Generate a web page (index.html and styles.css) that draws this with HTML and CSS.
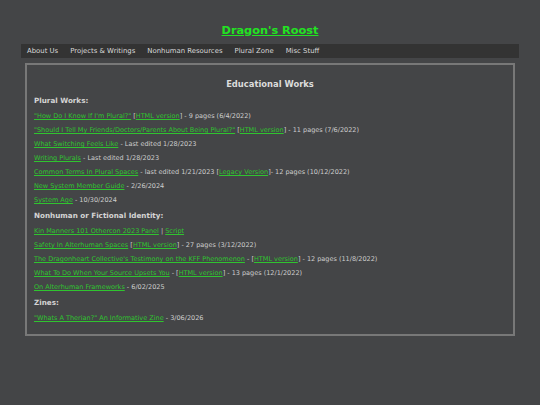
FILE: index.html
```html
<!DOCTYPE html>
<html>
<head>
<meta charset="utf-8">
<link rel="stylesheet" href="styles.css">
</head>
<body>
<div class="page">
  <header class="site-header">
    <a class="site-title" href="#">Dragon's Roost</a>
  </header>
  <nav class="nav">
    <a href="#">About Us</a>
    <a href="#">Projects &amp; Writings</a>
    <a href="#">Nonhuman Resources</a>
    <a href="#">Plural Zone</a>
    <a href="#">Misc Stuff</a>
  </nav>
  <main class="box">
    <h2 class="box-title">Educational Works</h2>

    <h3 class="section">Plural Works:</h3>
    <div class="item"><a href="#">"How Do I Know If I'm Plural?"</a> [<a href="#">HTML version</a>] - 9 pages (6/4/2022)</div>
    <div class="item"><a href="#">"Should I Tell My Friends/Doctors/Parents About Being Plural?"</a> [<a href="#">HTML version</a>] - 11 pages (7/6/2022)</div>
    <div class="item"><a href="#">What Switching Feels Like</a> - Last edited 1/28/2023</div>
    <div class="item"><a href="#">Writing Plurals</a> - Last edited 1/28/2023</div>
    <div class="item"><a href="#">Common Terms In Plural Spaces</a> - last edited 1/21/2023 [<a href="#">Legacy Version</a>]- 12 pages (10/12/2022)</div>
    <div class="item"><a href="#">New System Member Guide</a> - 2/26/2024</div>
    <div class="item"><a href="#">System Age</a> - 10/30/2024</div>

    <h3 class="section">Nonhuman or Fictional Identity:</h3>
    <div class="item"><a href="#">Kin Manners 101 Othercon 2023 Panel</a> | <a href="#">Script</a></div>
    <div class="item"><a href="#">Safety In Alterhuman Spaces</a> [<a href="#">HTML version</a>] - 27 pages (3/12/2022)</div>
    <div class="item"><a href="#">The Dragonheart Collective's Testimony on the KFF Phenomenon</a> - [<a href="#">HTML version</a>] - 12 pages (11/8/2022)</div>
    <div class="item"><a href="#">What To Do When Your Source Upsets You</a> - [<a href="#">HTML version</a>] - 13 pages (12/1/2022)</div>
    <div class="item"><a href="#">On Alterhuman Frameworks</a> - 6/02/2025</div>

    <h3 class="section">Zines:</h3>
    <div class="item"><a href="#">"Whats A Therian?" An Informative Zine</a> - 3/06/2026</div>
  </main>
</div>
</body>
</html>
```

FILE: styles.css
```css
html, body {
  margin: 0;
  padding: 0;
  background: #444547;
}
body {
  font-family: "DejaVu Sans", Verdana, sans-serif;
  color: #cdcdcd;
}
.page {
  padding: 19px 21px 0 21px;
}
.site-header {
  text-align: center;
  height: 20px;
  line-height: 20px;
}
.site-title {
  font-size: 11.3px;
  font-weight: bold;
  color: #22e322;
  text-decoration: underline;
}
.nav {
  margin-top: 5px;
  height: 14px;
  background: #333333;
  display: flex;
  align-items: center;
  padding-left: 6px;
  gap: 12px;
  font-size: 6.9px;
}
.nav a {
  color: #d8d8d8;
  text-decoration: none;
}
.box {
  margin: 5px 4px 0 4px;
  border: 2px solid #787878;
  padding: 11px 7px 9px 7px;
}
.box-title {
  margin: 0;
  text-align: center;
  font-size: 8.4px;
  line-height: 16px;
  color: #dcdcdc;
}
.section {
  margin: 1px 0 1px 0;
  font-size: 7.2px;
  line-height: 15px;
  color: #d4d4d4;
}
.item {
  font-size: 6.5px;
  line-height: 14px;
  white-space: nowrap;
}
.item a {
  color: #2fc42f;
  text-decoration: underline;
}
```
